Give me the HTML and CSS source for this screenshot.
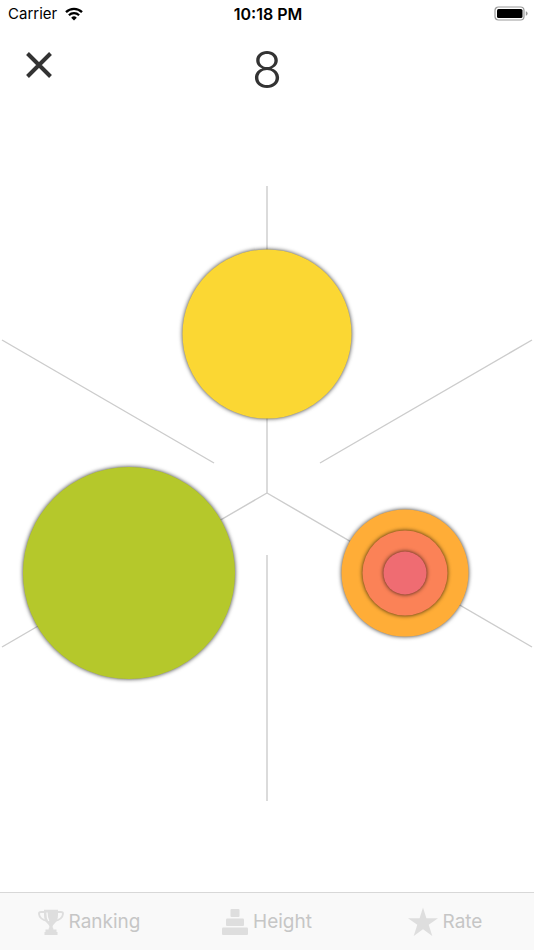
FILE: index.html
```
<!DOCTYPE html>
<html lang="en">
<head>
	<meta charset="UTF-8">
	<meta name="viewport" content="width=device-width, initial-scale=1">
	<title>Circles</title>
	<link rel="stylesheet" href="styles.css">
</head>
<body>
	<div class="status">
		<div class="carrier">
			<span>Carrier</span>
			<svg class="wifi" viewBox="0 0 18 14" aria-hidden="true">
				<path d="M1 5.2a11.5 11.5 0 0 1 16 0" fill="none" stroke="#000" stroke-width="2.3"/>
				<path d="M3.9 8.2a7.3 7.3 0 0 1 10.2 0" fill="none" stroke="#000" stroke-width="2.2"/>
				<path d="M9 13.6L6.2 10.7a4 4 0 0 1 5.6 0z"/>
			</svg>
		</div>
		<time class="clock">10:18 PM</time>
		<svg class="battery" viewBox="0 0 34 15" aria-hidden="true">
			<rect x="1" y="1" width="29" height="13" rx="3.5" fill="none" stroke="#999" stroke-width="1.2"/>
			<rect x="3" y="3" width="25.5" height="9" rx="1.5"/>
			<path d="M31.8 5.2q1.8.6 1.8 2.3t-1.8 2.3z" fill="#999"/>
		</svg>
	</div>
	<header class="top">
		<button type="button" class="close" aria-label="Close">
			<svg viewBox="0 0 26 26" aria-hidden="true">
				<path d="M1.5 1.5l23 23M24.5 1.5l-23 23" stroke="#333" stroke-width="4"/>
			</svg>
		</button>
		<h1 class="score">8</h1>
	</header>
	<main class="board">
		<svg viewBox="0 0 534 780" role="img" aria-label="Game board">
			<!-- slots -->
			<g class="lines">
				<path d="M267 74v307"/>
				<path d="M267 443v246"/>
				<path d="M2 228l212 123"/>
				<path d="M532 228L320 351"/>
				<path d="M267 381L2 535"/>
				<path d="M267 381l265 154"/>
			</g>
			<!-- pieces -->
			<circle class="piece yellow" cx="267" cy="222" r="84.5"/>
			<circle class="piece green" cx="129" cy="461" r="106"/>
			<circle class="piece orange" cx="405" cy="461" r="63.5"/>
			<circle class="piece coral" cx="405" cy="461" r="42.5"/>
			<circle class="piece pink" cx="405" cy="461" r="21.5"/>
		</svg>
	</main>
	<nav class="tabs">
		<button type="button">
			<svg viewBox="0 0 26 26" aria-hidden="true">
				<path d="M6.500 3H3Q.9 3 1 5q.6 5.500 8.500 7M19.500 3H23q2.100 0 2 2-.6 5.500-8.500 7" fill="none" stroke="#dedede" stroke-width="1.9"/>
				<path d="M6 .8h14v5.200c0 4-1.200 6.500-3.600 8.800-1.400 1.300-1.900 2.200-1.900 4.200h-3c0-2-.5-2.900-1.900-4.200C7.200 12.500 6 10 6 6z"/>
				<path d="M11 18.500h4l.5 2h3V23h1v3h-13v-3h1v-2.500h3z"/>
				<path d="M9 3.500q-.1 5.500 1.800 8.500" fill="none" stroke="#f9f9f9" stroke-width="1.300"/>
			</svg>
			<span>Ranking</span>
		</button>
		<button type="button">
			<svg viewBox="0 0 26 26" aria-hidden="true">
				<rect x="8.500" y="0" width="9" height="8" rx="1"/>
				<rect x="4" y="9.500" width="18" height="7.500" rx="1"/>
				<rect x="0" y="18.500" width="26" height="7.500" rx="1"/>
			</svg>
			<span>Height</span>
		</button>
		<button type="button">
			<svg class="star" viewBox="0 0 30 30" aria-hidden="true">
				<path d="M15 .5l3.400 10.700H30l-9.300 6.600 3.600 11.200L15 22.200 5.700 29l3.600-11.200L0 11.200h11.600z"/>
			</svg>
			<span>Rate</span>
		</button>
	</nav>
</body>
</html>
```
FILE: styles.css
```
*{margin:0; padding:0; box-sizing:border-box;}
body{display:flex; flex-direction:column; min-height:100vh; background:#fff; color:#000; font-family:Inter, "Liberation Sans", sans-serif;}
svg{display:block;}
button{border:0; background:none; font:inherit; color:inherit; cursor:pointer;}

.status{display:grid; grid-template-columns:1fr auto 1fr; align-items:center; height:27px; padding:0 6px 0 8px; font-size:15px;}
.carrier{display:flex; align-items:center; gap:8px;}
.wifi{width:18px; height:14px;}
.clock{font-size:16px; font-weight:600;}
.battery{width:34px; height:15px; justify-self:end;}

.top{display:grid; grid-template-columns:1fr auto 1fr; align-items:start; height:85px; padding:13px 14px;}
.close{width:50px; height:50px; padding:12px;}
.close svg{width:26px; height:26px;}
.score{font-size:50px; line-height:60px; font-weight:300; color:#333;}

.board{flex:1; display:flex; align-items:center;}
.board svg{width:100%; max-height:100%; overflow:visible;}
.lines path{fill:none; stroke:#ccc; stroke-width:1.4;}
.piece{filter:drop-shadow(0 0 2px rgba(0,0,0,.8));}
.yellow{fill:#fbd733;}
.green{fill:#b5c82b;}
.orange{fill:#ffad37;}
.coral{fill:#fb8257;}
.pink{fill:#ef6c72;}

.tabs{display:flex; height:58px; background:#f9f9f9; border-top:1px solid #d8d8d8;}
.tabs button{flex:1; display:flex; align-items:center; justify-content:center; gap:5px; color:#c6c6c6; font-size:19px;}
.tabs svg{width:26px; height:26px; fill:#dedede;}
.tabs .star{width:30px; height:30px;}
```
